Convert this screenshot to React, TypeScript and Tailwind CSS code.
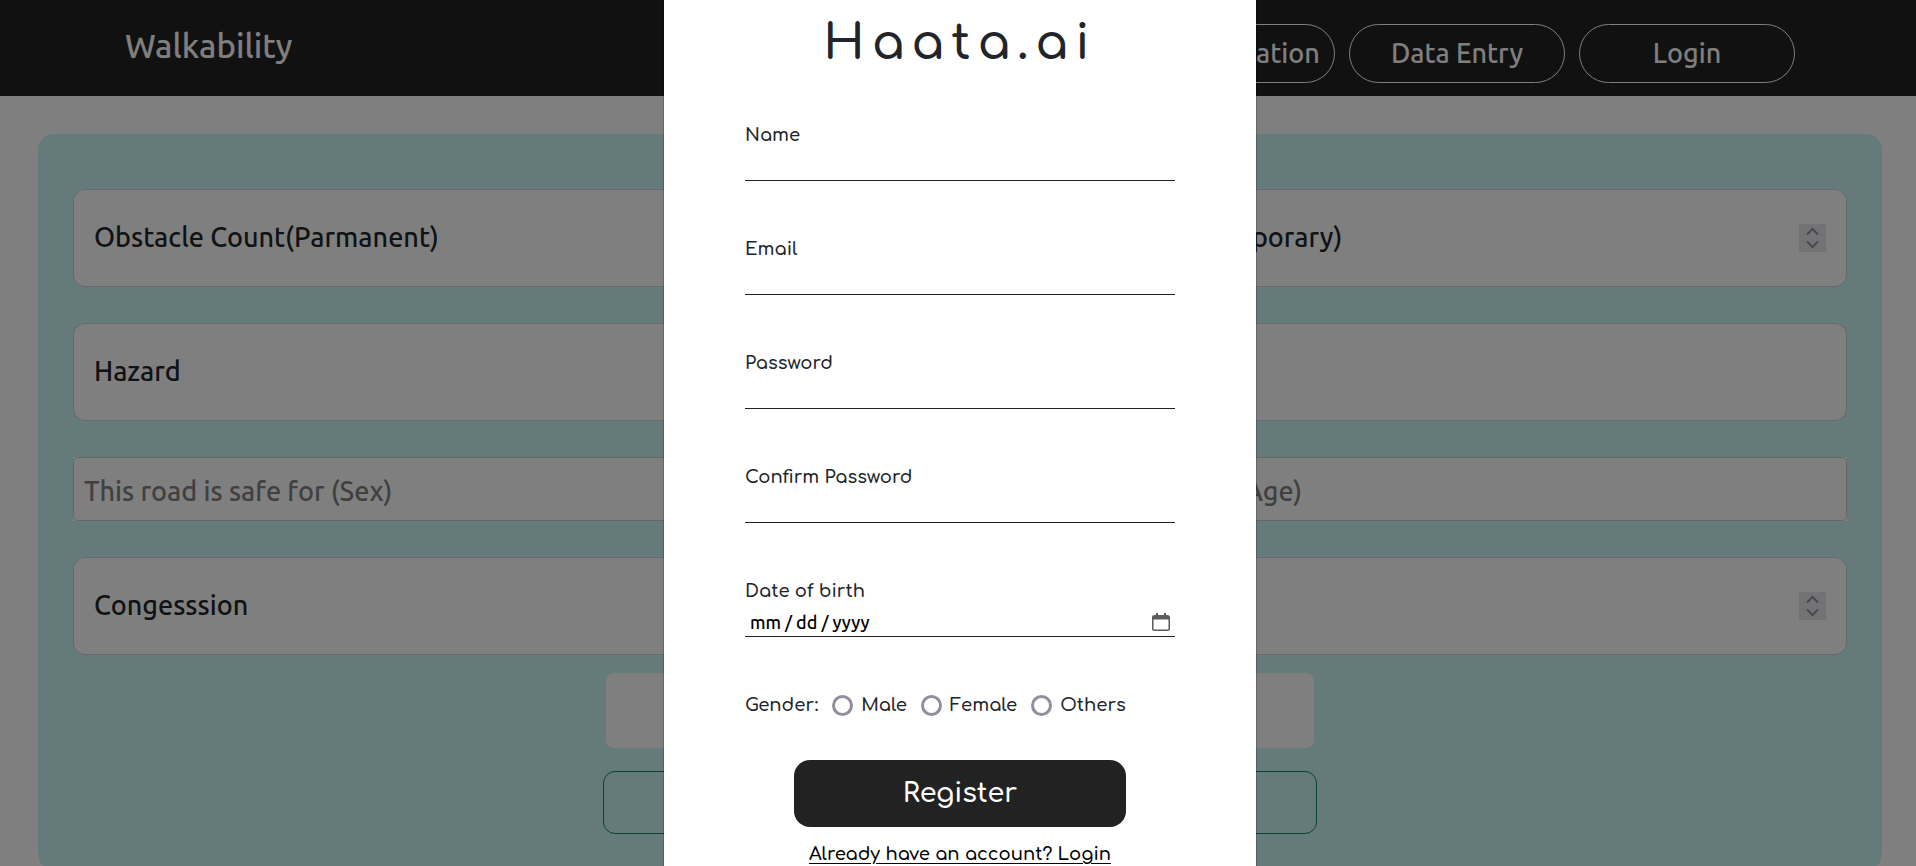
import { useState } from "react";
import type { ReactNode } from "react";

const bodyFont = "font-['Ubuntu','Noto_Sans',sans-serif]";
const brandFont = "font-['Comfortaa','Inter',sans-serif]";

function NavButton({ children }: { children: ReactNode }) {
  return (
    <button
      type="button"
      className="flex h-[59px] w-[216px] items-center justify-center whitespace-nowrap rounded-full border border-white pb-0.5 text-[27px] leading-10 text-white"
    >
      {children}
    </button>
  );
}

function Chevrons() {
  return (
    <svg viewBox="0 0 27 28" className="h-7 w-[27px] bg-[#e6e6ec]" fill="none" stroke="#8f8f9d" strokeWidth="2" aria-hidden="true">
      <path d="M8 10.5 13.5 5 19 10.5" />
      <path d="M8 17.5 13.5 23 19 17.5" />
    </svg>
  );
}

function Field({ label, spinner = false }: { label: string; spinner?: boolean }) {
  return (
    <div className="flex h-[98px] items-center rounded-xl border border-[#ced4da] bg-white px-5">
      <input
        type="text"
        inputMode={spinner ? "numeric" : "text"}
        aria-label={label}
        placeholder={label}
        className="min-w-0 flex-1 bg-transparent pb-0.5 text-[27px] leading-10 text-[#212529] outline-none placeholder:text-[#212529]"
      />
      {spinner && <Chevrons />}
    </div>
  );
}

function Picker({ label }: { label: string }) {
  return (
    <div className="h-16 bg-white">
      <input
        type="text"
        aria-label={label}
        placeholder={label}
        className="h-full w-full rounded-[5px] border border-[#cccccc] bg-white px-[10px] pt-1 text-[27px] leading-10 outline-none placeholder:text-[#808080]"
      />
    </div>
  );
}

const lineInput =
  "block h-[31px] w-full border-b border-[#212121] bg-transparent px-1 pt-0.5 text-[18px] font-medium leading-7 text-black outline-none font-['Ubuntu','Noto_Sans',sans-serif]";

function LineField({ id, label, type }: { id: string; label: string; type: string }) {
  return (
    <div className="mb-[53px]">
      <label htmlFor={id} className="block text-[18px] leading-[30px]">
        {label}
      </label>
      <input id={id} type={type} className={lineInput} />
    </div>
  );
}

function DateField() {
  return (
    <div className="mb-[53px]">
      <label htmlFor="dob" className="block text-[18px] leading-[30px]">
        Date of birth
      </label>
      <div className="relative">
        <input
          id="dob"
          type="date"
          className={`${lineInput} [&::-webkit-calendar-picker-indicator]:opacity-0 [&::-webkit-datetime-edit-text]:px-[3px]`}
        />
        <svg viewBox="0 0 20 20" className="pointer-events-none absolute right-1 top-1.5 size-5" fill="#5b5b5b" aria-hidden="true">
          <path d="M5 1h2v2h6V1h2v2h1.5A2.500 2.500 0 0 1 19 5.500V16.500A2.500 2.500 0 0 1 16.500 19h-13A2.500 2.500 0 0 1 1 16.500v-11A2.500 2.500 0 0 1 3.500 3H5zM2.500 7.500v9a1 1 0 0 0 1 1h13a1 1 0 0 0 1-1v-9z" />
        </svg>
      </div>
    </div>
  );
}

function Radio({ value, selected, onSelect }: { value: string; selected: boolean; onSelect: (v: string) => void }) {
  return (
    <label className="flex items-center gap-2">
      <input
        type="radio"
        name="gender"
        checked={selected}
        onChange={() => onSelect(value)}
        className="size-[21px] appearance-none rounded-full border-3 border-[#8f8f9d] bg-white checked:bg-[#222222]"
      />
      {value}
    </label>
  );
}

export default function App() {
  const [gender, setGender] = useState("");
  return (
    <div className={`h-screen overflow-hidden bg-white font-medium ${bodyFont}`}>
      <header className="flex h-24 items-center justify-between bg-[#222222] pl-[125px] pr-[121px]">
        <a href="#" className="pb-1 text-[33px] leading-10 text-white">
          Walkability
        </a>
        <nav className="flex gap-[14px] pt-[11px]">
          <NavButton>Authentication</NavButton>
          <NavButton>Data Entry</NavButton>
          <NavButton>Login</NavButton>
        </nav>
      </header>

      <main className="ml-[38px] mr-[34px] mt-[38px] rounded-2xl bg-[#caf5f6] px-[35px] pb-9 pt-[55px]">
        <div className="grid grid-cols-2 gap-9">
          <Field label="Obstacle Count(Parmanent)" spinner />
          <Field label="Obstacle Count(Temporary)" spinner />
          <Field label="Hazard" />
          <Field label="" />
          <Picker label="This road is safe for (Sex)" />
          <Picker label="This road is safe for (Age)" />
          <Field label="Congesssion" spinner />
          <Field label="" spinner />
        </div>
        <div className="mt-[18px] flex flex-col items-center gap-[23px]">
          <input type="text" aria-label="Notes" className="h-[75px] w-[708px] rounded-lg bg-white" />
          <button type="button" aria-label="Submit" className="h-[63px] w-[714px] rounded-xl border border-[#198754]" />
        </div>
      </main>

      <div className="fixed inset-0 overflow-hidden bg-black/50 pl-1">
        <div
          role="dialog"
          aria-label="Register"
          className={`mx-auto box-content min-h-screen w-[592px] border-x border-black/20 bg-white bg-clip-padding text-[#212529] ${brandFont} font-semibold`}
        >
          <form className="flex flex-col px-[81px]">
            <h1 className="mb-[47px] mt-[15px] text-center text-[48px] leading-[58px] tracking-[0.15em]">Haata.ai</h1>
            <LineField id="name" label="Name" type="text" />
            <LineField id="email" label="Email" type="email" />
            <LineField id="password" label="Password" type="password" />
            <LineField id="confirm" label="Confirm Password" type="password" />
            <DateField />
            <div className="flex items-center gap-[14px] text-[18px] leading-[30px]">
              <span>Gender:</span>
              <Radio value="Male" selected={gender === "Male"} onSelect={setGender} />
              <Radio value="Female" selected={gender === "Female"} onSelect={setGender} />
              <Radio value="Others" selected={gender === "Others"} onSelect={setGender} />
            </div>
            <button type="submit" className="mx-auto mt-10 h-[67px] w-[332px] rounded-2xl bg-[#222222] text-[27px] text-white">
              Register
            </button>
            <a href="#" className="mt-3 text-center text-[18px] leading-[30px] text-black underline underline-offset-3">
              Already have an account? Login
            </a>
          </form>
        </div>
      </div>
    </div>
  );
}
